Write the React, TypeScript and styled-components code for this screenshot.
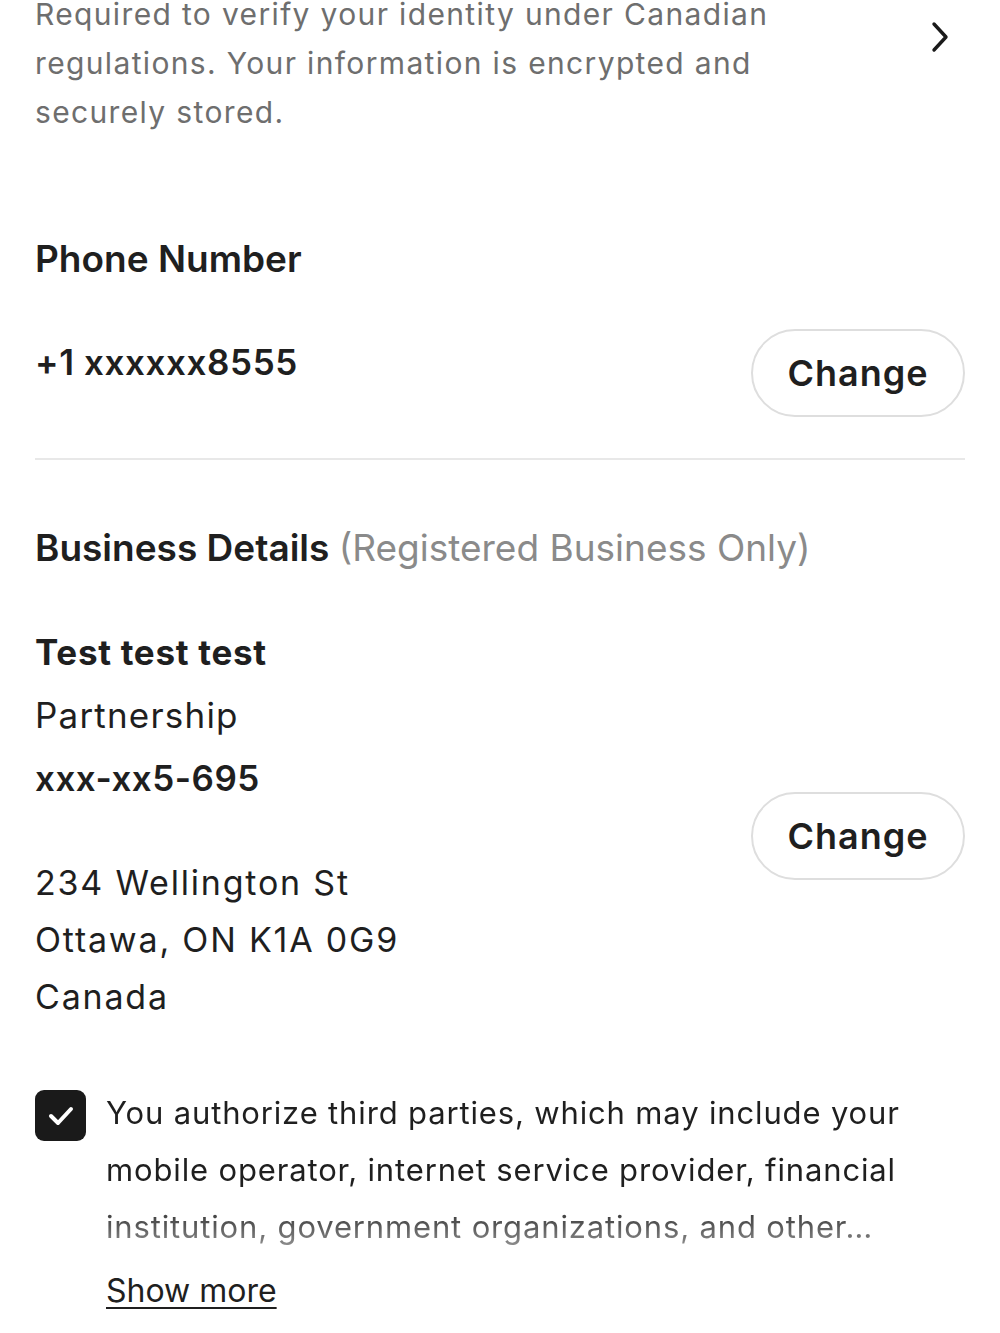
import * as React from 'react'
import styled, { createGlobalStyle } from 'styled-components'

const GlobalStyle = createGlobalStyle`
  html, body {
    margin: 0;
    padding: 0;
    background: #ffffff;
  }
  body {
    font-family: Inter, 'Noto Sans', 'Liberation Sans', sans-serif;
    color: #1f1f1f;
    -webkit-font-smoothing: antialiased;
  }
`

const Page = styled.div`
  width: 1000px;
  min-height: 1333px;
  box-sizing: border-box;
  padding: 0 35px;
  overflow: hidden;
`

const IntroRow = styled.div`
  display: flex;
  align-items: flex-start;
  justify-content: space-between;
  margin-top: -10px;
`

const Description = styled.p`
  margin: 0;
  width: 800px;
  font-size: 30px;
  line-height: 49px;
  letter-spacing: 1.35px;
  color: #6e6e6e;
`

const Chevron = styled.svg`
  margin-top: 31px;
  margin-right: 15px;
  flex-shrink: 0;
`

const SectionTitle = styled.h2<{ $top: number }>`
  margin: ${(p) => p.$top}px 0 0;
  font-size: 37px;
  line-height: 44px;
  font-weight: 600;
  color: #1f1f1f;
`

const Muted = styled.span`
  font-weight: 400;
  color: #8a8a8a;
`

const Row = styled.div<{ $top: number }>`
  display: flex;
  align-items: flex-start;
  justify-content: space-between;
  margin-top: ${(p) => p.$top}px;
`

const Value = styled.div<{ $top?: number }>`
  margin-top: ${(p) => p.$top ?? 0}px;
  font-size: 35px;
  line-height: 44px;
  font-weight: 600;
  letter-spacing: 0.6px;
`

const ChangeButton = styled.button<{ $top?: number }>`
  flex-shrink: 0;
  margin-top: ${(p) => p.$top ?? 0}px;
  width: 214px;
  height: 88px;
  box-sizing: border-box;
  border: 2px solid #dedede;
  border-radius: 44px;
  background: #ffffff;
  font-family: inherit;
  font-size: 36px;
  font-weight: 600;
  letter-spacing: 1px;
  color: #1f1f1f;
  cursor: pointer;
`

const Divider = styled.hr`
  margin: 41px 0 0;
  border: 0;
  height: 2px;
  background: #e8e8e8;
`

const DetailsColumn = styled.div`
  display: flex;
  flex-direction: column;
`

const DetailLine = styled.div<{ $weight: number; $spacing: number }>`
  font-size: 35px;
  line-height: 63px;
  font-weight: ${(p) => p.$weight};
  letter-spacing: ${(p) => p.$spacing}px;
`

const Address = styled.div`
  margin-top: 44px;
  font-size: 34px;
  line-height: 57px;
  font-weight: 400;
  letter-spacing: 1.8px;
`

const Consent = styled.div`
  display: flex;
  align-items: flex-start;
  gap: 20px;
  margin-top: 59px;
`

const CheckBox = styled.div`
  flex-shrink: 0;
  margin-top: 6px;
  width: 51px;
  height: 51px;
  border-radius: 9px;
  background: #1a1a1a;
  display: flex;
  align-items: center;
  justify-content: center;
`

const ConsentBody = styled.div`
  display: flex;
  flex-direction: column;
`

const ConsentText = styled.p`
  margin: 0;
  font-size: 31px;
  line-height: 57px;
  letter-spacing: 0.85px;
  color: #1f1f1f;
  -webkit-mask-image: linear-gradient(to bottom, #000 calc(100% - 57px), rgba(0, 0, 0, 0.75) calc(100% - 30px), rgba(0, 0, 0, 0.4) 100%);
  mask-image: linear-gradient(to bottom, #000 calc(100% - 57px), rgba(0, 0, 0, 0.75) calc(100% - 30px), rgba(0, 0, 0, 0.4) 100%);
`

const ShowMore = styled.a`
  margin-top: 7px;
  font-size: 32px;
  line-height: 57px;
  color: #1f1f1f;
  text-decoration: underline;
  text-decoration-thickness: 2px;
  text-underline-offset: 5px;
  cursor: pointer;
`

export default function App() {
  return (
    <Page>
      <GlobalStyle />
      <IntroRow>
        <Description>
          Required to verify your identity under Canadian
          <br />
          regulations. Your information is encrypted and
          <br />
          securely stored.
        </Description>
        <Chevron width="20" height="32" viewBox="0 0 20 32" fill="none">
          <path d="M4 3 L16 16 L4 29" stroke="#1a1a1a" strokeWidth="3.4" strokeLinecap="round" strokeLinejoin="round" />
        </Chevron>
      </IntroRow>

      <SectionTitle $top={100}>Phone Number</SectionTitle>
      <Row $top={48}>
        <Value $top={11}>+1 xxxxxx8555</Value>
        <ChangeButton>Change</ChangeButton>
      </Row>

      <Divider />

      <SectionTitle $top={66}>
        Business Details <Muted>(Registered Business Only)</Muted>
      </SectionTitle>
      <Row $top={51}>
        <DetailsColumn>
          <DetailLine $weight={700} $spacing={0.7}>Test test test</DetailLine>
          <DetailLine $weight={400} $spacing={1.2}>Partnership</DetailLine>
          <DetailLine $weight={600} $spacing={0.5}>xxx-xx5-695</DetailLine>
          <Address>
            234 Wellington St
            <br />
            Ottawa, ON K1A 0G9
            <br />
            Canada
          </Address>
        </DetailsColumn>
        <ChangeButton $top={171}>Change</ChangeButton>
      </Row>

      <Consent>
        <CheckBox>
          <svg width="28" height="22" viewBox="0 0 28 22" fill="none">
            <path d="M4 11 L11 18 L24 4" stroke="#ffffff" strokeWidth="4" strokeLinecap="round" strokeLinejoin="round" />
          </svg>
        </CheckBox>
        <ConsentBody>
          <ConsentText>
            You authorize third parties, which may include your
            <br />
            mobile operator, internet service provider, financial
            <br />
            institution, government organizations, and other…
          </ConsentText>
          <ShowMore>Show more</ShowMore>
        </ConsentBody>
      </Consent>
    </Page>
  )
}
